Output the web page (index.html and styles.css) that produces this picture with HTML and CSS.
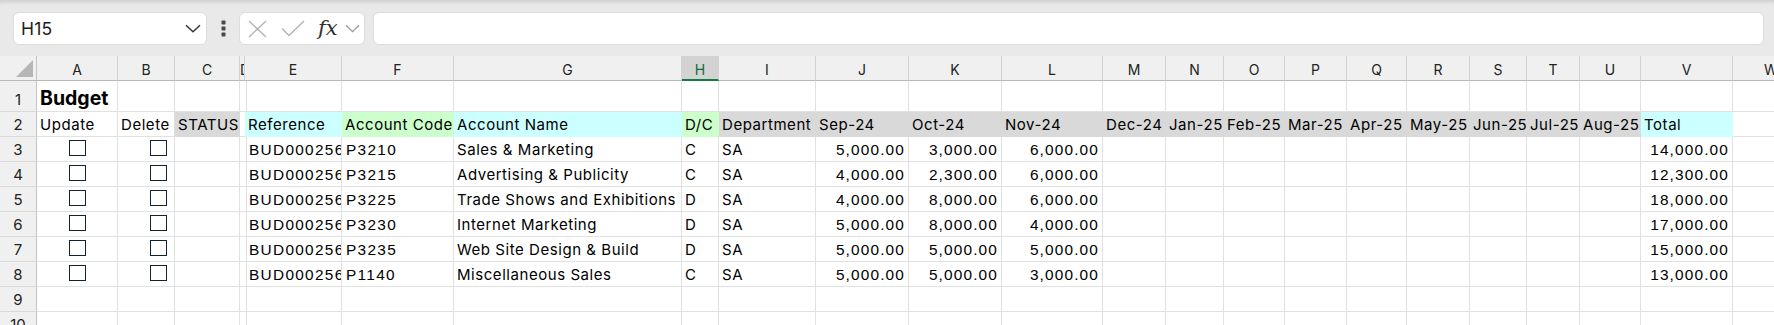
FILE: index.html
```html
<!DOCTYPE html>
<html lang="en">
<head>
<meta charset="utf-8">
<title>Budget</title>
<link rel="stylesheet" href="styles.css">
</head>
<body>
<div class="topbar">
  <div class="namebox">
    <span class="name">H15</span>
    <svg class="chev" width="16" height="9" viewBox="0 0 16 9"><path d="M1 1.2l7 6.6 7-6.6" fill="none" stroke="#333" stroke-width="1.4"/></svg>
  </div>
  <div class="dots">
    <svg width="5" height="17" viewBox="0 0 5 17"><rect x="0.5" y="0.5" width="4" height="4" rx="0.8" fill="#4a4a4a"/><rect x="0.5" y="6.5" width="4" height="4" rx="0.8" fill="#4a4a4a"/><rect x="0.5" y="12.5" width="4" height="4" rx="0.8" fill="#4a4a4a"/></svg>
  </div>
  <div class="fxbox">
    <svg class="ic-x" width="19" height="18" viewBox="0 0 19 18"><path d="M1 1l17 16M18 1L1 17" stroke="#b4b4b4" stroke-width="1.4" fill="none"/></svg>
    <svg class="ic-ok" width="24" height="17" viewBox="0 0 24 17"><path d="M1 8.5l7 7L23 1" stroke="#b4b4b4" stroke-width="1.4" fill="none"/></svg>
    <span class="fx">fx</span>
    <svg class="ic-chev" width="15" height="9" viewBox="0 0 15 9"><path d="M1 1.2l6.5 6.4L14 1.2" fill="none" stroke="#9a9a9a" stroke-width="1.3"/></svg>
  </div>
  <div class="formula"></div>
</div>

<div class="sheet">
  <div class="row hdr">
    <div class="corner"><svg width="17" height="17" viewBox="0 0 17 17"><polygon points="17,0 17,17 0,17" fill="#b6b6b6"/></svg></div>
    <div class="ch">A</div><div class="ch">B</div><div class="ch">C</div><div class="ch chd">D</div><div class="ch">E</div><div class="ch">F</div><div class="ch">G</div><div class="ch sel">H</div><div class="ch">I</div><div class="ch">J</div><div class="ch">K</div><div class="ch">L</div><div class="ch">M</div><div class="ch">N</div><div class="ch">O</div><div class="ch">P</div><div class="ch">Q</div><div class="ch">R</div><div class="ch">S</div><div class="ch">T</div><div class="ch">U</div><div class="ch">V</div><div class="ch">W</div>
  </div>

  <div class="row">
    <div class="rh">1</div>
    <div class="c title">Budget</div><div class="c"></div><div class="c"></div><div class="c"></div><div class="c"></div><div class="c"></div><div class="c"></div><div class="c"></div><div class="c"></div><div class="c"></div><div class="c"></div><div class="c"></div><div class="c"></div><div class="c"></div><div class="c"></div><div class="c"></div><div class="c"></div><div class="c"></div><div class="c"></div><div class="c"></div><div class="c"></div><div class="c"></div><div class="c"></div>
  </div>

  <div class="row">
    <div class="rh">2</div>
    <div class="c">Update</div><div class="c">Delete</div><div class="c fill-x">STATUS</div><div class="c"></div><div class="c fill-c">Reference</div><div class="c fill-g">Account Code</div><div class="c fill-c">Account Name</div><div class="c fill-g">D/C</div><div class="c fill-x">Department</div><div class="c fill-x">Sep-24</div><div class="c fill-x">Oct-24</div><div class="c fill-x">Nov-24</div><div class="c fill-x">Dec-24</div><div class="c fill-x">Jan-25</div><div class="c fill-x">Feb-25</div><div class="c fill-x">Mar-25</div><div class="c fill-x">Apr-25</div><div class="c fill-x">May-25</div><div class="c fill-x">Jun-25</div><div class="c fill-x">Jul-25</div><div class="c fill-x">Aug-25</div><div class="c fill-c">Total</div><div class="c"></div>
  </div>

  <div class="row">
    <div class="rh">3</div>
    <div class="c cb"><span class="box"></span></div><div class="c cb"><span class="box"></span></div><div class="c"></div><div class="c"></div><div class="c code">BUD000256</div><div class="c code">P3210</div><div class="c">Sales &amp; Marketing</div><div class="c">C</div><div class="c">SA</div><div class="c num">5,000.00</div><div class="c num">3,000.00</div><div class="c num">6,000.00</div><div class="c"></div><div class="c"></div><div class="c"></div><div class="c"></div><div class="c"></div><div class="c"></div><div class="c"></div><div class="c"></div><div class="c"></div><div class="c num">14,000.00</div><div class="c"></div>
  </div>

  <div class="row">
    <div class="rh">4</div>
    <div class="c cb"><span class="box"></span></div><div class="c cb"><span class="box"></span></div><div class="c"></div><div class="c"></div><div class="c code">BUD000256</div><div class="c code">P3215</div><div class="c">Advertising &amp; Publicity</div><div class="c">C</div><div class="c">SA</div><div class="c num">4,000.00</div><div class="c num">2,300.00</div><div class="c num">6,000.00</div><div class="c"></div><div class="c"></div><div class="c"></div><div class="c"></div><div class="c"></div><div class="c"></div><div class="c"></div><div class="c"></div><div class="c"></div><div class="c num">12,300.00</div><div class="c"></div>
  </div>

  <div class="row">
    <div class="rh">5</div>
    <div class="c cb"><span class="box"></span></div><div class="c cb"><span class="box"></span></div><div class="c"></div><div class="c"></div><div class="c code">BUD000256</div><div class="c code">P3225</div><div class="c">Trade Shows and Exhibitions</div><div class="c">D</div><div class="c">SA</div><div class="c num">4,000.00</div><div class="c num">8,000.00</div><div class="c num">6,000.00</div><div class="c"></div><div class="c"></div><div class="c"></div><div class="c"></div><div class="c"></div><div class="c"></div><div class="c"></div><div class="c"></div><div class="c"></div><div class="c num">18,000.00</div><div class="c"></div>
  </div>

  <div class="row">
    <div class="rh">6</div>
    <div class="c cb"><span class="box"></span></div><div class="c cb"><span class="box"></span></div><div class="c"></div><div class="c"></div><div class="c code">BUD000256</div><div class="c code">P3230</div><div class="c">Internet Marketing</div><div class="c">D</div><div class="c">SA</div><div class="c num">5,000.00</div><div class="c num">8,000.00</div><div class="c num">4,000.00</div><div class="c"></div><div class="c"></div><div class="c"></div><div class="c"></div><div class="c"></div><div class="c"></div><div class="c"></div><div class="c"></div><div class="c"></div><div class="c num">17,000.00</div><div class="c"></div>
  </div>

  <div class="row">
    <div class="rh">7</div>
    <div class="c cb"><span class="box"></span></div><div class="c cb"><span class="box"></span></div><div class="c"></div><div class="c"></div><div class="c code">BUD000256</div><div class="c code">P3235</div><div class="c">Web Site Design &amp; Build</div><div class="c">D</div><div class="c">SA</div><div class="c num">5,000.00</div><div class="c num">5,000.00</div><div class="c num">5,000.00</div><div class="c"></div><div class="c"></div><div class="c"></div><div class="c"></div><div class="c"></div><div class="c"></div><div class="c"></div><div class="c"></div><div class="c"></div><div class="c num">15,000.00</div><div class="c"></div>
  </div>

  <div class="row">
    <div class="rh">8</div>
    <div class="c cb"><span class="box"></span></div><div class="c cb"><span class="box"></span></div><div class="c"></div><div class="c"></div><div class="c code">BUD000256</div><div class="c code">P1140</div><div class="c">Miscellaneous Sales</div><div class="c">C</div><div class="c">SA</div><div class="c num">5,000.00</div><div class="c num">5,000.00</div><div class="c num">3,000.00</div><div class="c"></div><div class="c"></div><div class="c"></div><div class="c"></div><div class="c"></div><div class="c"></div><div class="c"></div><div class="c"></div><div class="c"></div><div class="c num">13,000.00</div><div class="c"></div>
  </div>

  <div class="row">
    <div class="rh">9</div>
    <div class="c"></div><div class="c"></div><div class="c"></div><div class="c"></div><div class="c"></div><div class="c"></div><div class="c"></div><div class="c"></div><div class="c"></div><div class="c"></div><div class="c"></div><div class="c"></div><div class="c"></div><div class="c"></div><div class="c"></div><div class="c"></div><div class="c"></div><div class="c"></div><div class="c"></div><div class="c"></div><div class="c"></div><div class="c"></div><div class="c"></div>
  </div>

  <div class="row">
    <div class="rh">10</div>
    <div class="c"></div><div class="c"></div><div class="c"></div><div class="c"></div><div class="c"></div><div class="c"></div><div class="c"></div><div class="c"></div><div class="c"></div><div class="c"></div><div class="c"></div><div class="c"></div><div class="c"></div><div class="c"></div><div class="c"></div><div class="c"></div><div class="c"></div><div class="c"></div><div class="c"></div><div class="c"></div><div class="c"></div><div class="c"></div><div class="c"></div>
  </div>
</div>
</body>
</html>
```

FILE: styles.css
```css
* { box-sizing: border-box; }

html, body {
  margin: 0;
  padding: 0;
  width: 1774px;
  height: 325px;
  overflow: hidden;
  background: #ffffff;
  font-family: "Inter", "Noto Sans", sans-serif;
  color: #000;
}

/* ---------- formula bar ---------- */
.topbar {
  height: 56px;
  display: flex;
  align-items: stretch;
  padding: 12px 10px 11px 13px;
  background: #e9e9e9;
  box-shadow: inset 0 5px 4px -3px rgba(0, 0, 0, 0.13);
}

.namebox {
  width: 194px;
  display: flex;
  align-items: center;
  padding: 0 5px 0 7px;
  background: #fff;
  border: 1px solid #dcdcdc;
  border-radius: 6px;
}

.name {
  font-size: 17.5px;
  color: #1c1c1c;
  letter-spacing: 0.2px;
}

.chev { margin-left: auto; }

.dots {
  width: 32px;
  display: flex;
  align-items: center;
  justify-content: center;
}

.fxbox {
  width: 126px;
  display: flex;
  align-items: center;
  padding-left: 8px;
  background: #fff;
  border: 1px solid #dcdcdc;
  border-radius: 6px;
}

.ic-x { margin-right: 14px; }
.ic-ok { margin-right: 13px; }

.fx {
  font-family: "DejaVu Serif", "Liberation Serif", serif;
  font-style: italic;
  font-size: 21px;
  line-height: 1;
  color: #2e2e2e;
  margin-right: 7px;
  margin-top: -1px;
}

.formula {
  flex: 1;
  margin-left: 8px;
  background: #fff;
  border: 1px solid #dcdcdc;
  border-radius: 6px;
}

/* ---------- sheet grid ---------- */
.sheet {
  display: grid;
  width: 1810px;
  grid-template-columns: 37px 81px 57px 65px 5px 97px 112px 228px 37px 97px 93px 93px 101px 63px 58px 61px 62px 60px 63px 57px 53px 61px 92px 77px;
  grid-template-rows: 25px 31px repeat(9, 25px);
}

.row { display: contents; }

.corner {
  background: #f0f0f0;
  border-right: 1px solid #c4c4c4;
  border-bottom: 1px solid #b8b8b8;
  display: flex;
  align-items: flex-end;
  justify-content: flex-end;
  padding: 0 3px 3px 0;
}

.ch {
  background: #f0f0f0;
  border-right: 1px solid #d2d2d2;
  border-bottom: 1px solid #b8b8b8;
  display: flex;
  align-items: center;
  justify-content: center;
  font-size: 14px;
  color: #222;
  overflow: hidden;
  padding-top: 2px;
}

.ch.chd {
  justify-content: flex-start;
  padding-left: 0;
}

.ch.sel {
  background: #d3d3d3;
  color: #0f6a3c;
  border-bottom: 2px solid #107c41;
  padding-top: 3px;
}

.rh {
  background: #f0f0f0;
  border-right: 1px solid #c4c4c4;
  border-bottom: 1px solid #d9d9d9;
  display: flex;
  align-items: flex-end;
  justify-content: center;
  font-size: 15px;
  line-height: 18px;
  padding-bottom: 2px;
  color: #222;
}

.c {
  border-right: 1px solid #e1e1e1;
  border-bottom: 1px solid #e1e1e1;
  display: flex;
  align-items: flex-end;
  padding: 0 3px 2px 3px;
  font-size: 15px;
  line-height: 18px;
  letter-spacing: 0.55px;
  white-space: nowrap;
  overflow: hidden;
}

.c.title {
  font-size: 19.5px;
  font-weight: 700;
  letter-spacing: 0;
  line-height: 24px;
  padding-bottom: 1px;
}

.c.code {
  font-family: "Liberation Sans", Arial, sans-serif;
  font-size: 15.4px;
  letter-spacing: 1.3px;
  padding-left: 4px;
}

.c.num {
  font-family: "Liberation Sans", Arial, sans-serif;
  font-size: 15.4px;
  letter-spacing: 1.15px;
  justify-content: flex-end;
  padding-right: 3px;
}

.c.cb {
  align-items: flex-start;
  padding: 3px 0 0 32px;
}

.box {
  width: 17px;
  height: 16px;
  border: 1px solid #13222f;
  background: #fff;
}

.fill-c { background: #ccffff; border-color: #ccffff; }
.fill-g { background: #ccffcc; border-color: #ccffcc; }
.fill-x { background: #d9d9d9; border-color: #d9d9d9; }
```
